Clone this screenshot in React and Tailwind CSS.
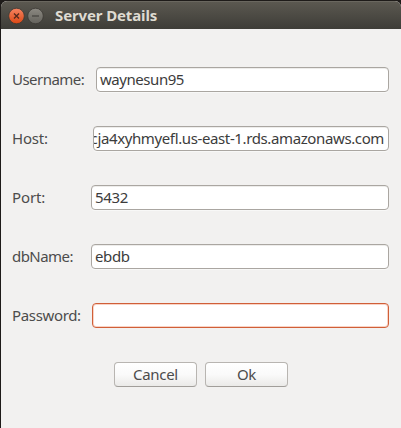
import React from 'react';

const fields = [
  { label: 'Username:', value: 'waynesun95', labelClass: 'w-[84px] tracking-[-0.53px]', valueClass: 'tracking-[-0.45px]' },
  { label: 'Host:', value: 'cja4xyhmyefl.us-east-1.rds.amazonaws.com', labelClass: 'w-[81px] tracking-[-0.2px]', valueClass: 'tracking-[-0.38px]', scrolled: true },
  { label: 'Port:', value: '5432', labelClass: 'w-[79px] tracking-[-0.1px]', valueClass: 'tracking-[-0.3px]' },
  { label: 'dbName:', value: 'ebdb', labelClass: 'w-[79px] tracking-[-0.55px]', valueClass: 'tracking-[-0.4px]' },
  { label: 'Password:', value: '', labelClass: 'w-[80px] tracking-[-0.35px]', valueClass: '', focused: true },
];

function Field({ label, value, labelClass, valueClass, scrolled, focused }) {
  const border = focused
    ? 'border-[#d05f38] shadow-[inset_0_0_0_1px_#f9d3c5]'
    : 'border-[#aaa6a1] shadow-[inset_0_1px_0_#eeedeb,0_1px_0_#f8f8f7]';
  return (
    <div className="flex h-[25px] items-center">
      <label className={`shrink-0 whitespace-nowrap pb-0.5 text-[#4c4c4c] ${labelClass}`}>{label}</label>
      <div className={`flex h-[25px] min-w-0 flex-1 items-center overflow-hidden rounded-[4px] border bg-white text-[#3c3c3c] ${border} ${scrolled ? 'justify-end pr-1' : 'pl-[3px]'}`}>
        <span className={`whitespace-nowrap pb-0.5 ${valueClass}`}>{value}</span>
      </div>
    </div>
  );
}

function DialogButton({ children, className }) {
  return (
    <button className={`h-[25px] w-[83px] rounded-[4px] border border-[#b8b5b1] border-b-[#a19e9a] bg-linear-to-b from-white via-[#fafafa] to-[#ebeae8] leading-[21px] text-[#4c4c4c] ${className}`}>
      {children}
    </button>
  );
}

export default function App() {
  return (
    <div className="h-[428px] w-[401px] overflow-hidden bg-[#1e1b19] pt-px pl-px font-['Noto_Sans',sans-serif] text-[15px] leading-[22px]">
      <div className="flex h-[427px] flex-col overflow-hidden rounded-t-[6px] bg-[#f2f1f0]">
        <header className="flex h-7 shrink-0 items-center border-t border-[#6a675f] bg-linear-to-b from-[#5b5850] to-[#3e3d38] pl-[7px]">
          <svg width="37" height="18" viewBox="0 0 37 18" fill="none">
            <defs>
              <linearGradient id="closeFill" x1="0" y1="0" x2="0" y2="1">
                <stop stopColor="#f58462" />
                <stop offset="1" stopColor="#dd4814" />
              </linearGradient>
              <linearGradient id="minFill" x1="0" y1="0" x2="0" y2="1">
                <stop stopColor="#8c8982" />
                <stop offset="1" stopColor="#64625c" />
              </linearGradient>
            </defs>
            <circle cx="8.5" cy="9" r="7.8" fill="url(#closeFill)" stroke="#3b3934" strokeWidth="0.8" />
            <path d="M6 6.5l5 5m0-5l-5 5" stroke="#55291c" strokeWidth="1.4" />
            <circle cx="27.5" cy="9" r="7.8" fill="url(#minFill)" stroke="#3b3934" strokeWidth="0.8" />
            <path d="M24 9h7" stroke="#3a3935" strokeWidth="1.1" />
          </svg>
          <h1 className="ml-[10px] whitespace-nowrap pb-0.5 text-[15px] font-bold tracking-[-0.13px] text-[#dfdbd2]">Server Details</h1>
        </header>
        <main className="flex flex-col pt-[38px] pr-3 pl-[11px]">
          <div className="flex flex-col gap-[34px]">
            {fields.map((f) => <Field key={f.label} {...f} />)}
          </div>
          <div className="mt-[34px] flex gap-2 pl-[102px]">
            <DialogButton className="tracking-[-0.3px]">Cancel</DialogButton>
            <DialogButton className="tracking-[-0.3px]">Ok</DialogButton>
          </div>
        </main>
      </div>
    </div>
  );
}
